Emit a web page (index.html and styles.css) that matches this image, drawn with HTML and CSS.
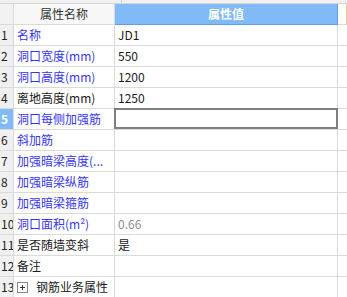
FILE: index.html
```html
<!DOCTYPE html>
<html>
<head>
<meta charset="utf-8">
<link rel="stylesheet" href="styles.css">
</head>
<body>
<div class="strip"><span class="strip-div"></span></div>
<div class="grid">
  <div class="c num hdr-num"></div>
  <div class="c name hdr-name">属性名称</div>
  <div class="c val hdr-val">属性值</div>
  <div class="c ext hdr-ext"></div>

  <div class="c num">1</div><div class="c name blue">名称</div><div class="c val">JD1</div><div class="c ext"></div>
  <div class="c num">2</div><div class="c name blue">洞口宽度(mm)</div><div class="c val">550</div><div class="c ext"></div>
  <div class="c num">3</div><div class="c name blue">洞口高度(mm)</div><div class="c val">1200</div><div class="c ext"></div>
  <div class="c num">4</div><div class="c name">离地高度(mm)</div><div class="c val">1250</div><div class="c ext"></div>
  <div class="c num sel">5</div><div class="c name blue">洞口每侧加强筋</div><div class="c val editing"><span class="editor"></span></div><div class="c ext"></div>
  <div class="c num">6</div><div class="c name blue">斜加筋</div><div class="c val"></div><div class="c ext"></div>
  <div class="c num">7</div><div class="c name blue">加强暗梁高度(...</div><div class="c val"></div><div class="c ext"></div>
  <div class="c num">8</div><div class="c name blue">加强暗梁纵筋</div><div class="c val"></div><div class="c ext"></div>
  <div class="c num">9</div><div class="c name blue">加强暗梁箍筋</div><div class="c val"></div><div class="c ext"></div>
  <div class="c num">10</div><div class="c name blue">洞口面积(m²)</div><div class="c val gray">0.66</div><div class="c ext"></div>
  <div class="c num">11</div><div class="c name">是否随墙变斜</div><div class="c val">是</div><div class="c ext"></div>
  <div class="c num">12</div><div class="c name">备注</div><div class="c val"></div><div class="c ext"></div>
  <div class="c num">13</div><div class="c name group"><svg class="plus" width="11" height="11" viewBox="0 0 11 11"><rect x="0.5" y="0.5" width="10" height="10" fill="#fff" stroke="#8a8a8a"/><path d="M3 5.5h5M5.5 3v5" stroke="#333" stroke-width="1"/></svg><span>钢筋业务属性</span></div><div class="c val"></div><div class="c ext"></div>
</div>
</body>
</html>
```

FILE: styles.css
```css
html, body {
  margin: 0;
  padding: 0;
  background: #fff;
}
body {
  width: 347px;
  height: 297px;
  overflow: hidden;
  font-family: "Noto Sans CJK SC", "Noto Sans", sans-serif;
  font-size: 12px;
  color: #1a1a1a;
}
.strip {
  height: 4px;
  background: #f0f0f0;
  box-sizing: border-box;
  border-bottom: 1px solid #d6d6d6;
  display: flex;
}
.strip-div {
  margin-left: 121px;
  width: 1px;
  background: #cfcfcf;
}
.grid {
  display: grid;
  grid-template-columns: 14px 101px 223px 9px;
  grid-auto-rows: 21px;
}
.c {
  box-sizing: border-box;
  border-right: 1px solid #dadada;
  border-bottom: 1px solid #dadada;
  display: flex;
  align-items: center;
  white-space: nowrap;
  overflow: hidden;
  line-height: 1;
}
.ext {
  border-right: none;
}
.num {
  background: #f0f0f0;
  padding-left: 1px;
  color: #222;
}
.name, .val {
  padding-left: 3px;
}
.hdr-num {
  background: #f2f2f2;
}
.hdr-name {
  background: #f7f7f7;
  justify-content: center;
  padding-left: 0;
  color: #333;
}
.hdr-val {
  background: #80bbf8;
  border-right: 1px solid #5f9fe6;
  border-bottom: 1px solid #5f9fe6;
  color: #fff;
  font-weight: bold;
  justify-content: center;
  padding-left: 0;
}
.hdr-ext {
  justify-content: flex-end;
  border-right: 1px solid #f6c48c;
}
.blue {
  color: #3535f5;
}
.gray {
  color: #8c8c98;
}
.sel {
  background: #80bbf8;
  color: #fff;
  font-weight: bold;
}
.editing {
  position: relative;
  overflow: visible;
}
.editor {
  position: absolute;
  top: -1px;
  left: -1px;
  right: -1px;
  bottom: 0;
  border: 2px solid #7f7f7f;
  background: #fff;
}
.group {
  gap: 8px;
}
.plus {
  flex: none;
}
```
